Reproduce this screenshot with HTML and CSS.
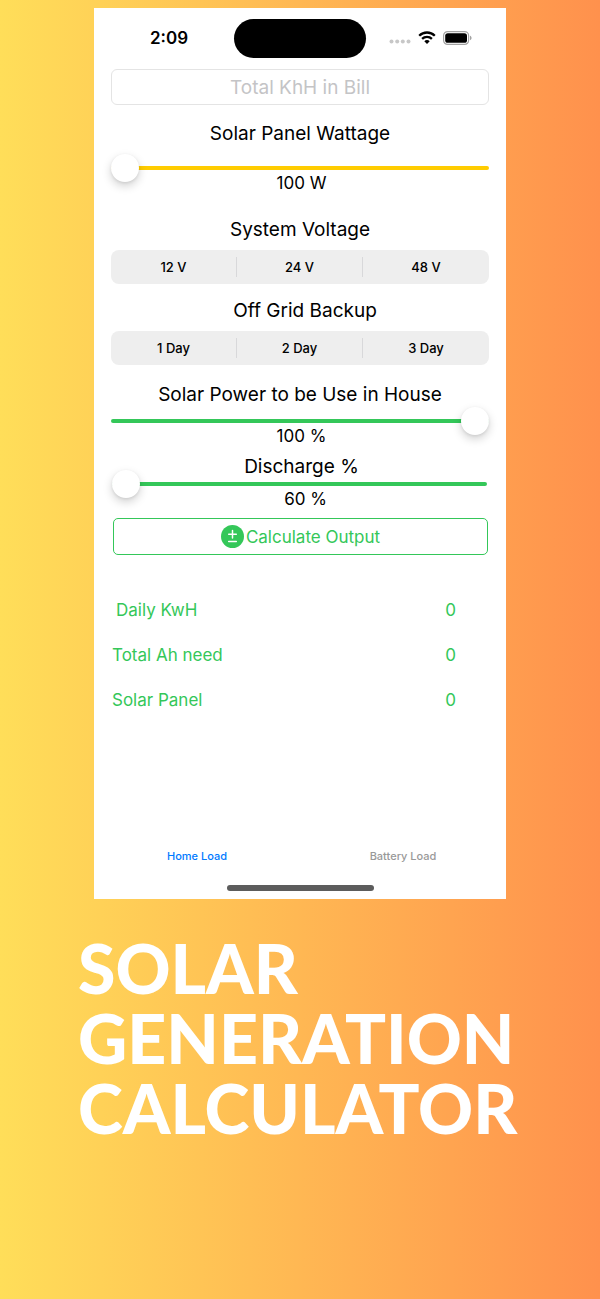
FILE: index.html
```html
<!DOCTYPE html>
<html lang="en">
<head>
<meta charset="utf-8">
<meta name="viewport" content="width=device-width, initial-scale=1">
<title>Solar Generation Calculator</title>
<link rel="stylesheet" href="styles.css">
</head>
<body>
<main class="phone">
  <header class="status">
    <span class="time">2:09</span>
    <span class="island"></span>
    <span class="indicators">
      <svg width="22" height="14" viewBox="0 0 22 14" fill="#c7c7c7"><circle cx="2.5" cy="10.500" r="2"/><circle cx="8.2" cy="10.500" r="2"/><circle cx="13.8" cy="10.500" r="2"/><circle cx="19.5" cy="10.500" r="2"/></svg>
      <svg width="18" height="14" viewBox="0 0 18 14" fill="none" stroke="#000" stroke-width="2.3"><path d="M1.200 4.700C5.500.4 12.500.4 16.800 4.700"/><path d="M4.100 7.900c2.700-2.700 7.100-2.700 9.800 0"/><path d="M6.300 10.200c1.500-1.500 3.900-1.500 5.400 0L9 13z" fill="#000" stroke="none"/></svg>
      <svg width="29" height="14" viewBox="0 0 29 14"><rect x=".6" y=".6" width="25" height="12.800" rx="4" fill="none" stroke="#a3a3a3" stroke-width="1.200"/><rect x="2.200" y="2.200" width="21.800" height="9.600" rx="2.600"/><path d="M27 4.800c2.100.7 2.100 3.700 0 4.400z" fill="#a3a3a3"/></svg>
    </span>
  </header>

  <form class="form">
    <input class="bill" type="text" placeholder="Total KhH in Bill" aria-label="Total KhH in Bill">

    <div class="field field-wattage">
      <label class="heading" for="wattage">Solar Panel Wattage</label>
      <input class="slider slider-yellow" id="wattage" type="range" min="100" max="600" value="100">
      <output class="value" for="wattage">100 W</output>
    </div>

    <fieldset class="group">
      <legend class="heading">System Voltage</legend>
      <div class="segments">
        <label class="segment"><input type="radio" name="voltage">12 V</label>
        <label class="segment"><input type="radio" name="voltage">24 V</label>
        <label class="segment"><input type="radio" name="voltage">48 V</label>
      </div>
    </fieldset>

    <fieldset class="group group-backup">
      <legend class="heading heading-backup">Off Grid Backup</legend>
      <div class="segments">
        <label class="segment"><input type="radio" name="backup">1 Day</label>
        <label class="segment"><input type="radio" name="backup">2 Day</label>
        <label class="segment"><input type="radio" name="backup">3 Day</label>
      </div>
    </fieldset>

    <div class="field field-usage">
      <label class="heading" for="usage">Solar Power to be Use in House</label>
      <input class="slider" id="usage" type="range" min="0" max="100" value="100">
      <output class="value" for="usage">100 %</output>
    </div>

    <div class="field field-discharge">
      <label class="heading" for="discharge">Discharge %</label>
      <input class="slider" id="discharge" type="range" min="60" max="100" value="60">
      <output class="value value-discharge" for="discharge">60 %</output>
    </div>

    <button class="calculate" type="button">
      <svg width="23" height="23" viewBox="0 0 23 23"><circle cx="11.500" cy="11.500" r="11.500" fill="#34c759"/><path d="M11.500 5.500v7.600M7.700 9.300h7.600M7.700 16.400h7.600" stroke="#fff" stroke-width="1.500" stroke-linecap="round"/></svg>
      Calculate Output
    </button>
  </form>

  <dl class="results">
    <div class="result result-daily"><dt>Daily KwH</dt><dd>0</dd></div>
    <div class="result"><dt>Total Ah need</dt><dd>0</dd></div>
    <div class="result"><dt>Solar Panel</dt><dd>0</dd></div>
  </dl>

  <nav class="tabs">
    <button class="tab tab-active" type="button">Home Load</button>
    <button class="tab" type="button">Battery Load</button>
  </nav>
  <div class="home-bar"></div>
</main>
<h1 class="title">Solar<br>Generation<br>Calculator</h1>
</body>
</html>
```
FILE: styles.css
```css
* { box-sizing: border-box; }

body {
  margin: 0;
  min-height: 100vh;
  padding: 8px 94px 0;
  background: linear-gradient(90deg, #ffde59, #ff914d);
  font-family: Inter, "Noto Sans", sans-serif;
  color: #000;
}

.phone {
  display: flex;
  flex-direction: column;
  min-height: 891px;
  padding-bottom: 8px;
  background: #fff;
}

.status {
  display: grid;
  grid-template-columns: 1fr 132px 1fr;
  align-items: center;
  height: 60px;
  margin-bottom: 1px;
}

.time { padding-left: 10px; text-align: center; font-size: 17px; font-weight: 600; }
.island { height: 39px; border-radius: 20px; background: #000; }
.indicators { display: flex; align-items: center; justify-content: flex-end; gap: 7px; padding-right: 34px; }

.form { display: flex; flex-direction: column; padding: 0 17px; }

.bill {
  width: 100%;
  height: 36px;
  border: 1px solid #e4e4e4;
  border-radius: 6px;
  padding: 0;
  background: #fff;
  text-align: center;
  font: 19px/24px Inter, "Noto Sans", sans-serif;
}
.bill::placeholder { color: #c4c4c6; opacity: 1; }

.field { display: flex; flex-direction: column; }
.field-wattage { margin-top: 17px; }
.field-wattage .slider { margin-top: 20px; }
.field-usage { margin-top: 18px; }
.field-discharge { margin-top: 9px; padding: 0 2px 0 1px; }
.field-discharge .slider { margin-top: 3px; }

.heading {
  display: block;
  width: 100%;
  padding: 0;
  text-align: center;
  font-size: 19px;
  line-height: 24px;
}
.field-discharge .heading { padding-left: 4px; }
.heading-backup { padding-left: 10px; }

.value { padding-left: 3px; margin-top: 3px; text-align: center; font-size: 17px; line-height: 20px; }
.value-discharge { padding-left: 12px; }

.slider {
  appearance: none;
  width: 100%;
  height: 4px;
  margin: 12px 0 0;
  border-radius: 2px;
  background: #34c759;
}
.slider-yellow { background: #ffcc00; }
.slider::-webkit-slider-thumb {
  appearance: none;
  width: 28px;
  height: 28px;
  border-radius: 50%;
  background: #fff;
  box-shadow: 0 4px 10px rgba(0, 0, 0, .18), 0 1px 3px rgba(0, 0, 0, .08);
}

.group { margin: 25px 0 0; padding: 0; border: 0; min-width: 0; }
.group-backup { margin-top: 15px; }
.segments {
  display: grid;
  grid-template-columns: repeat(3, 1fr);
  height: 34px;
  margin-top: 8px;
  border-radius: 8px;
  background: #eee;
}
.segment {
  display: flex;
  align-items: center;
  justify-content: center;
  margin: 7px 0;
  font-size: 13px;
  font-weight: 500;
}
.segment:not(:last-child) { border-right: 1px solid #d8d8da; }
.segment input { appearance: none; width: 0; height: 0; margin: 0; }

.calculate {
  display: flex;
  align-items: center;
  justify-content: center;
  gap: 2px;
  height: 37px;
  margin: 9px 1px 0 2px;
  border: 1px solid #34c759;
  border-radius: 5px;
  padding: 0;
  background: #fff;
  color: #34c759;
  font: 17px/20px Inter, "Noto Sans", sans-serif;
}

.results {
  display: flex;
  flex-direction: column;
  gap: 25px;
  margin: 45px 50px 0 18px;
  color: #34c759;
  font-size: 17px;
  line-height: 20px;
}
.result { display: flex; justify-content: space-between; }
.result-daily dt { padding-left: 4px; }
.result dd { margin: 0; }

.tabs { display: grid; grid-template-columns: 1fr 1fr; margin-top: auto; }
.tab {
  border: 0;
  padding: 0;
  background: none;
  color: #999;
  font: 500 11px/16px Inter, "Noto Sans", sans-serif;
}
.tab-active { color: #007aff; }

.home-bar {
  width: 147px;
  height: 6px;
  margin: 21px auto 0;
  border-radius: 3px;
  background: #5c5c5c;
}

.title {
  margin: 34px -30px 0 -16px;
  color: #fff;
  font: 900 68px/70px Lato, sans-serif;
  text-transform: uppercase;
}
```
